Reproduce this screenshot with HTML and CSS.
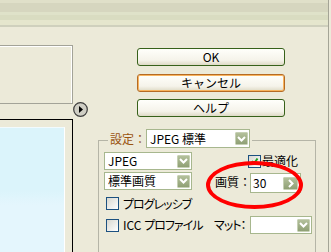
FILE: index.html
```html
<!DOCTYPE html>
<html lang="ja">
<head>
    <meta charset="UTF-8">
    <title>最適化設定</title>
    <link rel="stylesheet" href="styles.css">
</head>
<body>
    <div class="window">
        <div class="titlebar"></div>
        <div class="main">
            <div class="previews">
                <div class="preview-orig"></div>
                <div class="preview-opt"><div class="preview-image"></div></div>
            </div>
            <div class="splitter">
                <svg class="toggle" width="15" height="15" viewBox="0 0 15 15">
                    <circle cx="7.5" cy="7.5" r="6.8" fill="#cfcec4" stroke="#3c3c3c" stroke-width="1.2"/>
                    <polygon points="6,4 10,7.5 6,11" fill="#000"/>
                </svg>
            </div>
            <div class="side">
                <div class="buttons">
                    <button class="btn">OK</button>
                    <button class="btn btn-hot">キャンセル</button>
                    <button class="btn">ヘルプ</button>
                </div>
                <div class="group">
                    <div class="group-head">
                        <span class="head-line head-line-left"></span>
                        <div class="legend">
                            <span class="legend-label">設定：</span>
                            <div class="combo combo-preset">
                                <span class="combo-text">JPEG 標準</span>
                                <span class="drop"><svg width="9" height="6" viewBox="0 0 9 6"><polyline points="1,1 4.5,4.5 8,1" fill="none" stroke="#fff" stroke-width="2"/></svg></span>
                            </div>
                        </div>
                        <span class="head-line head-line-right"></span>
                    </div>
                    <div class="group-body">
                        <div class="row row-1">
                            <div class="combo combo-small">
                                <span class="combo-text">JPEG</span>
                                <span class="drop"><svg width="9" height="6" viewBox="0 0 9 6"><polyline points="1,1 4.5,4.5 8,1" fill="none" stroke="#fff" stroke-width="2"/></svg></span>
                            </div>
                            <span class="check opt-check"><svg width="11" height="11" viewBox="0 0 11 11"><polyline points="3,5 5,7.5 8.5,2.5" fill="none" stroke="#21a121" stroke-width="2"/></svg></span>
                            <span class="check-label">最適化</span>
                        </div>

                        <div class="row row-2">
                            <div class="combo combo-small">
                                <span class="combo-text">標準画質</span>
                                <span class="drop"><svg width="9" height="6" viewBox="0 0 9 6"><polyline points="1,1 4.5,4.5 8,1" fill="none" stroke="#fff" stroke-width="2"/></svg></span>
                            </div>
                            <span class="field-label quality-label">画質：</span>
                            <div class="quality">
                                <span class="combo-text">30</span>
                                <span class="drop drop-wide"><svg width="6" height="9" viewBox="0 0 6 9"><polyline points="1,1 4.5,4.5 1,8" fill="none" stroke="#fff" stroke-width="2"/></svg></span>
                            </div>
                            <div class="highlight"></div>
                        </div>

                        <div class="row row-3">
                            <span class="check"></span>
                            <span class="check-label kana">プログレッシブ</span>
                        </div>

                        <div class="row row-4">
                            <span class="check"></span>
                            <span class="check-label icc-label">ICC <span class="kana">プロファイル</span></span>
                            <span class="field-label kana matte-label">マット：</span>
                            <div class="combo combo-matte">
                                <span class="combo-text"></span>
                                <span class="drop"><svg width="9" height="6" viewBox="0 0 9 6"><polyline points="1,1 4.5,4.5 8,1" fill="none" stroke="#fff" stroke-width="2"/></svg></span>
                            </div>
                        </div>
                    </div>
                </div>
            </div>
        </div>
    </div>
</body>
</html>
```

FILE: styles.css
```css
* {
    box-sizing: border-box;
}
body {
    margin: 0;
    background: #ecead9;
    font-family: "Noto Sans CJK JP", "Noto Sans", sans-serif;
    font-size: 12px;
    line-height: 14px;
    color: #000;
}
.window {
    width: 329px;
    height: 252px;
    overflow: hidden;
    border-right: 1px solid #a4a496;
}
.titlebar {
    height: 27px;
    background: linear-gradient(to bottom,
        #e0e0c9 0, #e0e0c9 3px,
        #d6d6bf 3px, #d6d6bf 12px,
        #dfe2c9 12px, #dfe2c9 15px,
        #d9dcc1 15px, #d9dcc1 20px,
        #e5e6cd 20px, #e5e6cd 25px,
        #cfd0bd 25px);
}
.main {
    display: flex;
    height: 225px;
}
.previews {
    width: 73px;
    flex: none;
    display: flex;
    flex-direction: column;
}
.preview-orig {
    margin: 18px 0 0 -2px;
    width: 75px;
    height: 59px;
    flex: none;
    border: 1px solid #a3a398;
    box-shadow: inset -1px 1px 0 #fff;
}
.preview-opt {
    flex: 1;
    display: flex;
    margin: 15px 0 0 -2px;
    width: 75px;
    border-top: 1px solid #000;
    border-right: 1px solid #000;
    padding: 7px 7px 0 0;
}
.preview-image {
    flex: 1;
    border-top: 1px solid #f2fbfe;
    border-right: 1px solid #fff;
    background: linear-gradient(to bottom, #dbf4fb 0, #dbf4fb 50%, #e4f6fd 62%);
}
.splitter {
    width: 25px;
    flex: none;
}
.toggle {
    display: block;
    margin-top: 75px;
}
.side {
    flex: 1;
    display: flex;
    flex-direction: column;
}
.buttons {
    display: flex;
    flex-direction: column;
    margin: 21px 0 0 39px;
    width: 148px;
}
.btn {
    height: 18px;
    margin: 0 0 8px;
    padding: 0;
    font: inherit;
    line-height: 16px;
    color: #000;
    border: 1px solid #37611a;
    border-radius: 3px;
    background: linear-gradient(#fffffb, #f5f3ea 70%, #dedac6);
}
.btn:nth-child(2) {
    margin-bottom: 7px;
}
.btn:last-child {
    margin-bottom: 0;
}
.btn-hot {
    border-color: #b56b24;
    box-shadow: inset 0 0 0 1px #f8b45e;
}
.group {
    flex: 1;
    display: flex;
    flex-direction: column;
    width: 218px;
    margin-top: 12px;
}
.group-head {
    display: flex;
    height: 19px;
    flex: none;
}
.head-line {
    margin-top: 11px;
    border-top: 1px solid #b5b5a7;
}
.head-line-left {
    width: 10px;
    border-left: 1px solid #b5b5a7;
}
.head-line-right {
    flex: 1;
    border-right: 1px solid #b5b5a7;
}
.legend {
    display: flex;
    align-items: center;
    padding: 0 2px;
}
.legend-label {
    color: #9a5410;
}
.group-body {
    flex: 1;
    border-left: 1px solid #b5b5a7;
    border-right: 1px solid #b5b5a7;
    padding: 4px 0 0 5px;
}
.combo {
    display: flex;
    align-items: center;
    height: 18px;
    border: 1px solid #a7b78e;
    background: #fff;
    padding: 0 1px 0 3px;
}
.combo-text {
    flex: 1;
    white-space: nowrap;
}
.combo-preset {
    width: 104px;
    height: 19px;
}
.combo-small {
    width: 88px;
    flex: none;
}
.combo-matte {
    width: 62px;
    flex: none;
}
.drop {
    width: 13px;
    height: 13px;
    flex: none;
    display: flex;
    align-items: center;
    justify-content: center;
    border: 1px solid #c6d0b4;
    border-radius: 1px;
    background: linear-gradient(#b3c09b, #8fa075);
}
.drop-wide {
    width: 15px;
}
.row {
    display: flex;
    align-items: center;
}
.row-1 {
    height: 18px;
}
.row-2 {
    position: relative;
    margin-top: 2px;
    height: 20px;
    align-items: flex-start;
}
.row-3 {
    margin-top: 5px;
    height: 13px;
}
.row-4 {
    margin-top: 6px;
    height: 18px;
}
.check {
    width: 13px;
    height: 13px;
    flex: none;
    display: flex;
    align-items: center;
    justify-content: center;
    border: 1px solid #1c5180;
    background: linear-gradient(135deg, #d8d8d0, #fff);
}
.row-3 .check, .row-4 .check {
    margin-left: 2px;
}
.opt-check {
    margin-left: 56px;
}
.check-label {
    margin-left: 1px;
    white-space: nowrap;
}
.row-3 .check-label, .row-4 .check-label {
    margin-left: 4px;
}
.kana {
    font-feature-settings: "palt";
    letter-spacing: -1px;
}
.field-label {
    white-space: nowrap;
}
.quality-label {
    margin: 3px 0 0 23px;
    width: 35px;
}
.quality {
    display: flex;
    align-items: center;
    width: 51px;
    height: 20px;
    margin-top: 1px;
    border: 1px solid #a7b78e;
    background: #fff;
    padding: 0 2px;
}
.icc-label {
    width: 91px;
}
.matte-label {
    width: 36px;
}
.highlight {
    position: absolute;
    left: 102px;
    top: -11px;
    width: 97px;
    height: 48px;
    border: 4px solid #f00;
    border-radius: 50%;
}
```
